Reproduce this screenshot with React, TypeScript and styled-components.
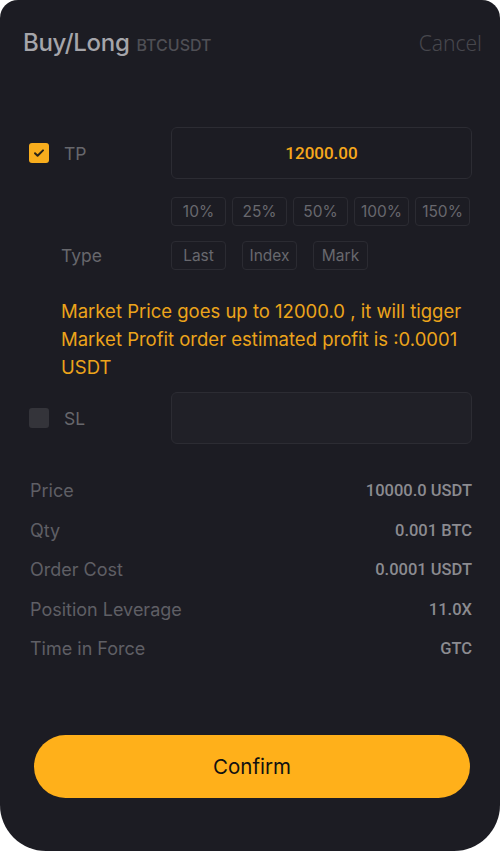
import React from "react";
import styled, { createGlobalStyle } from "styled-components";

const Global = createGlobalStyle`
  html, body { margin: 0; padding: 0; background: #ffffff; }
  * { box-sizing: border-box; }
`;

const Card = styled.div`
  width: 500px;
  height: 851px;
  background: #1c1c23;
  border-radius: 18px 18px 46px 46px;
  display: flex;
  flex-direction: column;
  font-family: Inter, "Noto Sans", sans-serif;
  overflow: hidden;
`;

const Header = styled.div`
  display: flex;
  align-items: baseline;
  justify-content: space-between;
  padding: 28px 18px 0 23px;
`;

const TitleGroup = styled.div`
  display: flex;
  align-items: baseline;
  gap: 7px;
`;

const Title = styled.span`
  font-size: 24px;
  font-weight: 500;
  color: #a5a5aa;
  letter-spacing: -0.3px;
`;

const Symbol = styled.span`
  font-size: 16px;
  font-weight: 500;
  color: #4f4f55;
`;

const Cancel = styled.span`
  font-family: "Noto Sans", sans-serif;
  font-size: 21px;
  font-weight: 300;
  color: #47474d;
`;

const Body = styled.div`
  display: flex;
  flex-direction: column;
  padding: 0 28px 0 29px;
`;

const FieldRow = styled.div<{ $mt: number }>`
  display: grid;
  grid-template-columns: 142px 1fr;
  align-items: center;
  margin-top: ${(p) => p.$mt}px;
`;

const CheckLabel = styled.div`
  display: flex;
  align-items: center;
  gap: 15px;
`;

const Box = styled.span<{ $on?: boolean }>`
  width: 20px;
  height: 20px;
  border-radius: 3px;
  background: ${(p) => (p.$on ? "#f8ad1d" : "#34343a")};
  display: inline-flex;
  align-items: center;
  justify-content: center;
`;

const Label = styled.span`
  font-size: 17.5px;
  color: #67676c;
`;

const Input = styled.div<{ $filled?: boolean }>`
  height: 52px;
  border-radius: 6px;
  border: 1px solid #2c2c33;
  background: ${(p) => (p.$filled ? "#1c1c23" : "#202027")};
  display: flex;
  align-items: center;
  justify-content: center;
  font-family: Roboto, "Noto Sans", sans-serif;
  font-size: 17px;
  font-weight: 500;
  color: #f6a81c;
`;

const ChipRow = styled.div<{ $gap: number; $mt: number }>`
  display: flex;
  gap: ${(p) => p.$gap}px;
  margin-top: ${(p) => p.$mt}px;
`;

const Chip = styled.span`
  width: 55px;
  height: 29px;
  border: 1px solid #2b2b32;
  border-radius: 4px;
  display: inline-flex;
  align-items: center;
  justify-content: center;
  font-size: 15.5px;
  color: #68686e;
`;

const TypeRow = styled.div`
  display: grid;
  grid-template-columns: 142px 1fr;
  align-items: center;
  margin-top: 15px;
`;

const TypeLabel = styled(Label)`
  padding-left: 32px;
`;

const Warning = styled.p`
  margin: 27px 0 0 32px;
  font-size: 18.5px;
  line-height: 28px;
  color: #eca41b;
`;

const Info = styled.div`
  display: flex;
  flex-direction: column;
  margin-top: 27px;
`;

const InfoRow = styled.div`
  height: 39.5px;
  display: flex;
  align-items: center;
  justify-content: space-between;
  padding-left: 1px;
`;

const InfoLabel = styled.span`
  font-size: 18px;
  color: #5f5f65;
`;

const InfoValue = styled.span`
  font-family: Roboto, "Noto Sans", sans-serif;
  font-size: 16.5px;
  font-weight: 500;
  color: #8b8b90;
`;

const Footer = styled.div`
  margin-top: auto;
  padding: 0 30px 53px 34px;
`;

const Confirm = styled.button`
  width: 100%;
  height: 63px;
  border: none;
  border-radius: 32px;
  background: #ffb01a;
  font-family: Inter, "Noto Sans", sans-serif;
  font-size: 20.5px;
  font-weight: 400;
  color: #111111;
`;

const Check = () => (
  <svg width="14" height="14" viewBox="0 0 14 14" fill="none">
    <path d="M3 7.2l2.6 2.6L11 4.4" stroke="#2a2418" strokeWidth="2" strokeLinecap="round" strokeLinejoin="round" />
  </svg>
);

const info: [string, string][] = [
  ["Price", "10000.0 USDT"],
  ["Qty", "0.001 BTC"],
  ["Order Cost", "0.0001 USDT"],
  ["Position Leverage", "11.0X"],
  ["Time in Force", "GTC"],
];

export default function App() {
  return (
    <>
      <Global />
      <Card>
        <Header>
          <TitleGroup>
            <Title>Buy/Long</Title>
            <Symbol>BTCUSDT</Symbol>
          </TitleGroup>
          <Cancel>Cancel</Cancel>
        </Header>
        <Body>
          <FieldRow $mt={70}>
            <CheckLabel>
              <Box $on>
                <Check />
              </Box>
              <Label>TP</Label>
            </CheckLabel>
            <Input $filled>12000.00</Input>
          </FieldRow>
          <FieldRow $mt={0}>
            <span />
            <ChipRow $gap={6} $mt={18}>
              {["10%", "25%", "50%", "100%", "150%"].map((t) => (
                <Chip key={t}>{t}</Chip>
              ))}
            </ChipRow>
          </FieldRow>
          <TypeRow>
            <TypeLabel>Type</TypeLabel>
            <ChipRow $gap={16} $mt={0}>
              {["Last", "Index", "Mark"].map((t) => (
                <Chip key={t}>{t}</Chip>
              ))}
            </ChipRow>
          </TypeRow>
          <Warning>
            Market Price goes up to 12000.0 , it will tigger Market Profit order estimated profit is :0.0001 USDT
          </Warning>
          <FieldRow $mt={11}>
            <CheckLabel>
              <Box />
              <Label>SL</Label>
            </CheckLabel>
            <Input />
          </FieldRow>
          <Info>
            {info.map(([k, v]) => (
              <InfoRow key={k}>
                <InfoLabel>{k}</InfoLabel>
                <InfoValue>{v}</InfoValue>
              </InfoRow>
            ))}
          </Info>
        </Body>
        <Footer>
          <Confirm>Confirm</Confirm>
        </Footer>
      </Card>
    </>
  );
}
